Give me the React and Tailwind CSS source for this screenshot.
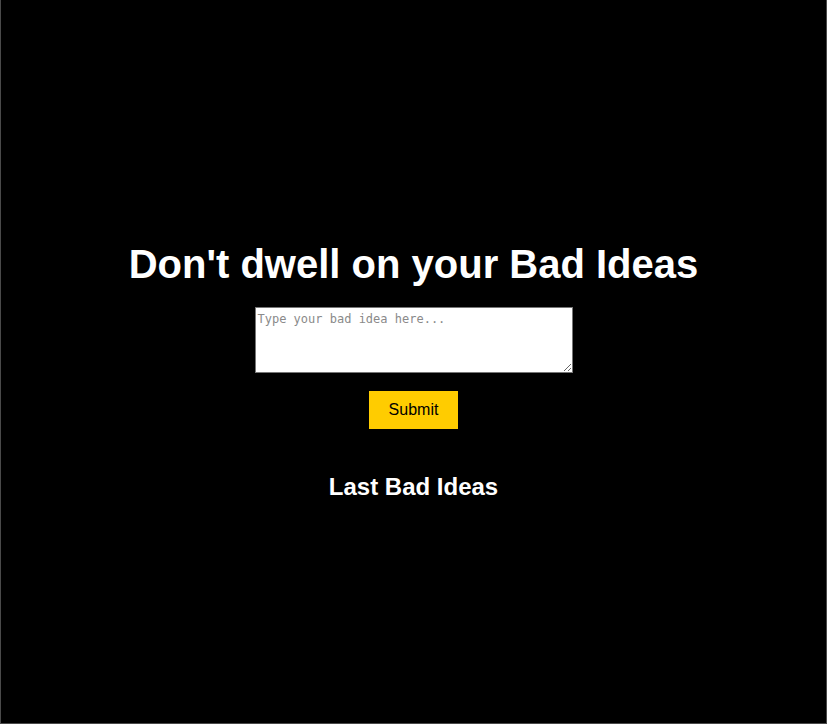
import React, { useState } from 'react';

const App = () => {
  const [idea, setIdea] = useState('');

  return (
    <div className="h-screen bg-black border-x border-b border-[#4a4a4a] flex flex-col items-center pt-[241px] text-white font-['Liberation_Sans',Arial,sans-serif]">
      <h1 className="text-[40px] font-bold leading-[46px]">Don't dwell on your Bad Ideas</h1>

      <textarea
        value={idea}
        onChange={(e) => setIdea(e.target.value)}
        placeholder="Type your bad idea here..."
        className="mt-[20px] w-[318px] h-[66px] bg-white text-black border border-[#767676] px-[2px] pt-[3px] pb-[2px] text-[12px] leading-[16px] font-['DejaVu_Sans_Mono',monospace] placeholder:text-[#8a8a8a] resize-y block"
      />

      <button className="mt-[18px] bg-[#ffcc00] text-black px-5 py-2.5 text-base leading-[18px] font-['Liberation_Sans',Arial,sans-serif]">
        Submit
      </button>

      <h2 className="mt-[44px] text-2xl font-bold leading-[28px]">Last Bad Ideas</h2>
    </div>
  );
};

export default App;
